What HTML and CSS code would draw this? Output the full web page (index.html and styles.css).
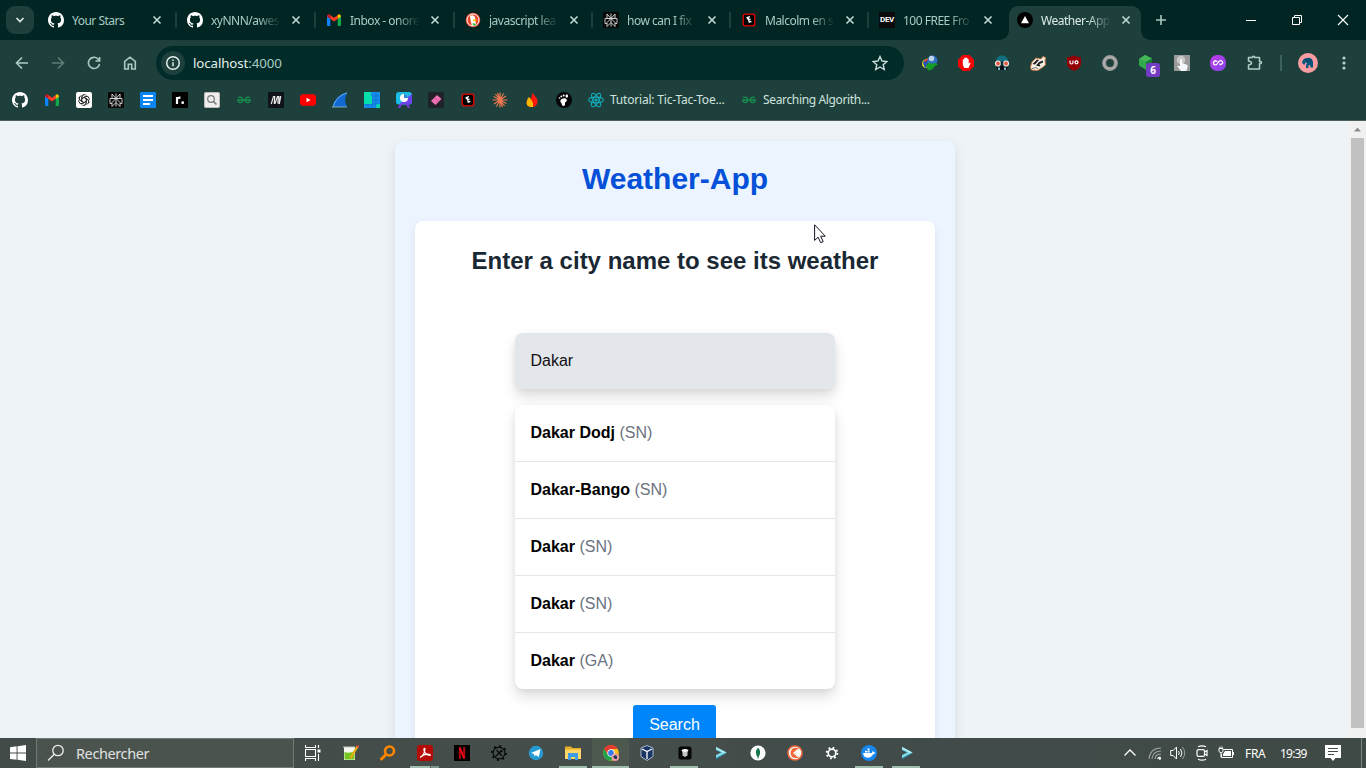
FILE: index.html
```
<!DOCTYPE html>
<html lang="en">
<head>
<meta charset="utf-8">
<title>Weather-App</title>
<link rel="stylesheet" href="styles.css">
</head>
<body>
<svg class="defs" width="0" height="0">
  <symbol id="github" viewBox="0 0 16 16"><path fill="#fff" d="M8 0C3.58 0 0 3.58 0 8c0 3.54 2.29 6.53 5.47 7.59.4.07.55-.17.55-.38 0-.19-.01-.82-.01-1.49-2.01.37-2.53-.49-2.69-.94-.09-.23-.48-.94-.82-1.13-.28-.15-.68-.52-.01-.53.63-.01 1.08.58 1.23.82.72 1.21 1.87.87 2.33.66.07-.52.28-.87.51-1.07-1.78-.2-3.64-.89-3.64-3.95 0-.87.31-1.59.82-2.15-.08-.2-.36-1.02.08-2.12 0 0 .67-.21 2.2.82.64-.18 1.32-.27 2-.27s1.36.09 2 .27c1.53-1.04 2.2-.82 2.2-.82.44 1.1.16 1.92.08 2.12.51.56.82 1.27.82 2.15 0 3.07-1.87 3.75-3.65 3.95.29.25.54.73.54 1.48 0 1.07-.01 1.93-.01 2.2 0 .21.15.46.55.38A8 8 0 0 0 16 8c0-4.42-3.58-8-8-8z"/></symbol>
  <symbol id="gmail" viewBox="0 0 16 16"><path fill="#0a84ff" d="M1 4l3.300 2.400V14H2a1 1 0 0 1-1-1z"/><path fill="#12a84c" d="M11.700 6.400L15 4v9a1 1 0 0 1-1 1h-2.300z"/><path fill="#fc3b24" d="M1.500 3.200Q3 1.800 4.300 3L8 5.800 11.700 3v3.800L8 9.600 4.300 6.800 1 4.500Q1 3.600 1.500 3.200z"/><path fill="#ffc400" d="M11.700 3Q13 1.800 14.400 2.900Q15 3.500 15 4.600l-3.300 2.300z"/><path fill="#b91424" d="M1 4.300Q1 2.800 2.500 2.300Q3.500 2.200 4.300 3v3.800z"/></symbol>
  <symbol id="perplexity" viewBox="0 0 16 16"><path fill="#090909" d="M0 0h16v16H0z"/><path fill="none" stroke="#dcdcdc" stroke-width=".9" d="M8 1.500v13M4 2l4 4.500L12 2v4.500H4zM2 6.500h12v5H12M4 11.500H2v-5M8 6.500l-4 4V14.500l4-4 4 4v-4z"/></symbol>
  <symbol id="red-e" viewBox="0 0 16 16"><rect x="2.200" y="2.200" width="11.600" height="11.600" rx="2" fill="#050505" stroke="#f00000" stroke-width="1.300"/><path d="M5.300 5.300l3.500-1.300.400 1.200-1.400.6.200.9 1.500-.2.200 1.400-1.300.3.300 1 1.500-.5.400 1.300-2.800 1.100-.9-3.500-.9-.3z" fill="#fff"/></symbol>
  <symbol id="gfg" viewBox="0 0 16 16"><path fill="none" stroke="#168b4d" stroke-width="1.400" d="M2.200 5.500Q6 4.300 6.700 7.700C7 11.500 1.800 11.500 1.800 8h12.400c0 3.500-5.200 3.500-4.900-.3Q10 4.300 13.800 5.500"/></symbol>
  <symbol id="close" viewBox="0 0 10 10"><path d="M1.500 1.500l7 7m0-7l-7 7" stroke="currentColor" stroke-width="1.600"/></symbol>
  <symbol id="shell" viewBox="0 0 16 16"><path fill="#277f97" d="M3 2.500L14 8 3 14.500v-3L8.500 8 3 5z"/><path fill="#80d9e5" d="M3 2l10.500 5.500L3 13v-3l5.500-2.700L3 5z"/><path fill="#b4edf3" d="M3 2l10.500 5.500-2.500.500L3 3.500z"/></symbol>
</svg>
<div class="screen">
  <header class="tab-strip">
    <button class="tab-search"><svg width="10" height="10" viewBox="0 0 10 10"><path d="M1.500 3l3.500 3.500L8.500 3" fill="none" stroke="#dce9e6" stroke-width="1.700"/></svg></button>
    <div class="tabs">
      <div class="tab"><svg class="ico"><use href="#github"/></svg><span class="title">Your Stars</span><svg class="close"><use href="#close"/></svg></div>
      <div class="tab"><svg class="ico"><use href="#github"/></svg><span class="title fade">xyNNN/awes</span><svg class="close"><use href="#close"/></svg></div>
      <div class="tab"><svg class="ico"><use href="#gmail"/></svg><span class="title fade">Inbox - onore</span><svg class="close"><use href="#close"/></svg></div>
      <div class="tab"><svg class="ico" viewBox="0 0 16 16"><circle cx="8" cy="8" r="7.300" fill="#e8472c"/><circle cx="8" cy="8" r="6" fill="none" stroke="#fff"/><path d="M5 4q3-2 5 1l.5 4 .5 4-4 1-1.500-6z" fill="#fff"/><path d="M8 7.500l4 .3-1 1.500H8z" fill="#ffc000"/><path d="M7.500 11l3 .7 1 1.600-3.500.5z" fill="#48b548"/></svg><span class="title fade">javascript lea</span><svg class="close"><use href="#close"/></svg></div>
      <div class="tab"><svg class="ico"><use href="#perplexity"/></svg><span class="title fade">how can I fix</span><svg class="close"><use href="#close"/></svg></div>
      <div class="tab"><svg class="ico"><use href="#red-e"/></svg><span class="title fade">Malcolm en s</span><svg class="close"><use href="#close"/></svg></div>
      <div class="tab last"><span class="dev"><b>DEV</b></span><span class="title fade">100 FREE Fro</span><svg class="close"><use href="#close"/></svg></div>
      <div class="tab active"><svg class="ico" viewBox="0 0 16 16"><circle cx="8" cy="8" r="8" fill="#000"/><path d="M8 4l4 7.300H4z" fill="#fff"/></svg><span class="title fade">Weather-App</span><svg class="close"><use href="#close"/></svg></div>
    </div>
    <svg class="new-tab" width="12" height="12" viewBox="0 0 12 12"><path d="M6 1v10M1 6h10" stroke="#a9c9c2" stroke-width="1.600"/></svg>
    <div class="window-controls">
      <svg viewBox="0 0 12 12"><path d="M1 6.500h10" stroke="#fff"/></svg>
      <svg viewBox="0 0 12 12"><path d="M1.500 3.500h7v7h-7zM3.500 3.500v-2h7v7h-2" fill="none" stroke="#fff"/></svg>
      <svg viewBox="0 0 12 12"><path d="M1 1l10 10M11 1L1 11" stroke="#fff" stroke-width="1.100"/></svg>
    </div>
  </header>

  <nav class="toolbar">
    <div class="nav-buttons">
      <svg viewBox="0 0 16 16"><path d="M14 8H3M8 2.500L2.500 8 8 13.500"/></svg>
      <svg class="dim" viewBox="0 0 16 16"><path d="M2 8h11M8 2.500L13.500 8 8 13.500"/></svg>
      <svg viewBox="0 0 16 16"><path d="M13.500 9A5.600 5.600 0 1 1 12 4l1.300 1.300M13.600 2v4H9.500"/></svg>
      <svg viewBox="0 0 16 16"><path d="M2.700 14V6.500L8 2.200l5.300 4.300V14H9.700V9.200H6.300V14z"/></svg>
    </div>
    <div class="omnibox">
      <span class="site-info"><svg viewBox="0 0 16 16"><circle cx="8" cy="8" r="6.300" fill="none" stroke="#e1eeeb" stroke-width="1.500"/><path d="M8 7.200v4M8 4.500v1.500" stroke="#e1eeeb" stroke-width="1.500"/></svg></span>
      <span class="url">localhost<i>:4000</i></span>
      <svg class="star" viewBox="0 0 16 16"><path d="M8 1.500l2 4.500 4.900.5-3.700 3.200 1.100 4.800L8 12l-4.300 2.500 1.100-4.800L1.100 6.500 6 6z" fill="none" stroke="#c8dcd8" stroke-width="1.400"/></svg>
    </div>
    <div class="extensions">
      <svg viewBox="0 0 16 16"><path d="M0 9Q0 4 6 3.500L8 7l-3 6Q0 13 0 9z" fill="#e4d02c"/><path d="M1 8Q2 4.500 6 4v7L3 13z" fill="#2455b5"/><path d="M2 5.500Q4 3.300 7 3.500L4 7z" fill="#db4032"/><circle cx="10.500" cy="5.500" r="5" fill="#326fc0"/><circle cx="9.500" cy="3.500" r="2.700" fill="#bdd6ee"/><path d="M4 10l4-3 1 2 4-1 3 1.500-3 1.500-3 3.500-4 1z" fill="#159d25"/></svg>
      <svg viewBox="0 0 16 16"><path d="M4.700 0h6.600L16 4.700v6.600L11.300 16H4.700L0 11.300V4.700z" fill="#f50505"/><path d="M4.800 8V4.600q.8-.8 1.400 0V3q.8-.8 1.500 0 .8-.9 1.600 0v1q.8-.8 1.400.2v4.500l.8-1q1-.5 1 .5L10.500 13H6.300L4.800 10z" fill="#fff"/></svg>
      <svg viewBox="0 0 16 16"><path d="M2 6Q3 .5 8 .5T14 6z" fill="#11707f"/><path d="M2 10h12l-1 5H3z" fill="#0a1117"/><path d="M4 12.500h2V15H4zM10 12.500h2V15h-2z" fill="#78b6c8"/><circle cx="4" cy="8.500" r="2.500" fill="#e4573f" stroke="#eeeae5" stroke-width="1.200"/><circle cx="12" cy="8.500" r="2.500" fill="#e4573f" stroke="#eeeae5" stroke-width="1.200"/><path d="M6.700 7h2.600v4H6.700z" fill="#102c39"/></svg>
      <svg viewBox="0 0 16 16"><path d="M.500 12L2 7l4-4 5 1 2-2.500 2.500 1L15 6l.500 4-4 3-4 2.500-6-.5z" fill="#f5f0e6" stroke="#d87843" stroke-width=".9"/><path d="M2.500 9L7 4.500l2 .5-4 4.500zM6 10.500L9 7l4-1.500v2L9.500 9l1 2.500-3-.5z" fill="#222"/><path d="M2 13.500l4-1 2 1.500" stroke="#777" fill="none"/></svg>
      <svg viewBox="0 0 16 16"><path d="M8 .5Q11 2.300 15 2.300V9q0 4-7 7-7-3-7-7V2.300Q5 2.300 8 .5z" fill="#930008"/><path d="M4 5.500v2q0 1.500 1.500 1.500t1.500-1.500v-2" stroke="#fff" fill="none" stroke-width="1.200"/><circle cx="10.500" cy="7.300" r="1.500" stroke="#fff" fill="none" stroke-width="1.200"/></svg>
      <svg viewBox="0 0 16 16"><circle cx="8" cy="8" r="5.900" fill="none" stroke="#999" stroke-width="4"/><circle cx="8" cy="8" r="6" fill="none" stroke="#aaa" stroke-width="2"/></svg>
      <span class="badge-host"><svg viewBox="0 0 16 16"><path d="M7 0l7 3.500v6L8 15 1 10.500V4z" fill="#31a84b"/><path d="M7 0l7 3.500L8 7 1 4z" fill="#43b457"/><path d="M8 7l6-3.500v6L8 15z" fill="#167c34"/></svg><b class="badge">6</b></span>
      <svg viewBox="0 0 16 16"><path d="M0 0h16v16H0z" fill="#9a9a9a"/><circle cx="7" cy="5" r="4.300" fill="#c9c9c9"/><path d="M6 11V4.500q1.200-1 2 0V8l5 1.700q1 .7.500 2.300l-1 4H7L3 11z" fill="#f4f7fc"/></svg>
      <svg viewBox="0 0 16 16"><defs><linearGradient id="violet" x2="1" y2="1"><stop stop-color="#c03aea"/><stop offset="1" stop-color="#8445e9"/></linearGradient></defs><rect width="16" height="16" rx="7" fill="url(#violet)"/><path d="M7.200 6.700L5.700 5.700Q3 6.500 3.500 9q2.300 2 4-.5l1.300-2 2-1q2 1 2 2.500l-2 1.700-1.500-1" fill="none" stroke="#fff" stroke-width="1.200"/></svg>
      <svg class="puzzle" viewBox="0 0 16 16"><path d="M1.500 2.500h4V1.700q1-1 2 0v.8h5v4h1.500q1 1 0 2h-1.500v5.500h-11v-4q3-.5 3-2t-3-2z" fill="none" stroke="#b3cec8" stroke-width="1.500" stroke-linejoin="round"/></svg>
    </div>
    <i class="bar"></i>
    <svg class="avatar" viewBox="0 0 20 20"><circle cx="10" cy="10" r="10" fill="#fa9da3"/><path d="M4 9.500Q5 5 9 5q5-1 6 4v5.500h-2.500L12 12l-1.500.5V15H8v-3l1-2-2-.5v2H5.500z" fill="#06577d"/><path d="M7 6.500q3 0 3 3M10 6q3 0 3 3" stroke="#093f61" fill="none"/></svg>
    <svg class="dots" viewBox="0 0 4 16"><circle cx="2" cy="3" r="1.600"/><circle cx="2" cy="8" r="1.600"/><circle cx="2" cy="13" r="1.600"/></svg>
  </nav>

  <nav class="bookmarks">
    <svg class="ico"><use href="#github"/></svg>
    <svg class="ico"><use href="#gmail"/></svg>
    <svg class="ico" viewBox="0 0 16 16"><rect width="16" height="16" rx="2" fill="#fff"/><g fill="none" stroke="#222" stroke-width=".8"><path id="petal" d="M5.700 9.300V5.300Q5.900 2.600 8.300 2.600q1.400 0 2.200 1.100M5.700 6.700l3.300-1.900q2.400-1.100 4 .7"/><use href="#petal" transform="rotate(60 8 8)"/><use href="#petal" transform="rotate(120 8 8)"/><use href="#petal" transform="rotate(180 8 8)"/><use href="#petal" transform="rotate(240 8 8)"/><use href="#petal" transform="rotate(300 8 8)"/></g></svg>
    <svg class="ico"><use href="#perplexity"/></svg>
    <svg class="ico" viewBox="0 0 16 16"><rect width="16" height="16" rx="1" fill="#0b86f7"/><path d="M3 4h10M3 8h10M3 12h7" stroke="#fff" stroke-width="2"/></svg>
    <svg class="ico" viewBox="0 0 16 16"><rect width="16" height="16" rx="1" fill="#000"/><path d="M5 12V5M5 8q0-2.500 3.500-2.300" stroke="#fff" stroke-width="2.200" fill="none"/><circle cx="10.700" cy="10.700" r="1.400" fill="#fff"/></svg>
    <svg class="ico" viewBox="0 0 16 16"><rect x=".5" y=".5" width="15" height="15" rx="1" fill="#eee" stroke="#bbb"/><circle cx="7" cy="7" r="3.300" fill="none" stroke="#777" stroke-width="1.200"/><path d="M9.500 9.500l3 3" stroke="#777" stroke-width="1.500"/></svg>
    <svg class="ico"><use href="#gfg"/></svg>
    <svg class="ico" viewBox="0 0 16 16"><path d="M0 0h16v16H0z" fill="#11131b"/><path d="M3.200 12L5.500 4.500H6.700L6.300 11.500H7L9.500 4.500h1L9.800 11.500" stroke="#e9e9e9" stroke-width="1.200" fill="none"/><path d="M12.500 4L11 12" stroke="#e9e9e9" stroke-width="1.700"/></svg>
    <svg class="ico" viewBox="0 0 16 16"><rect y="2.300" width="16" height="11.400" rx="3" fill="#f00"/><path d="M6.500 5.700v4.600l4-2.300z" fill="#fff"/></svg>
    <svg class="ico" viewBox="0 0 16 16"><path d="M.5 15Q3 3 15.500.5 11 7 15 15z" fill="#1269d3"/><path d="M1 15Q4 4 15 .8" stroke="#66b4ef" fill="none"/><path d="M0 15h15" stroke="#7aabb8"/></svg>
    <svg class="ico" viewBox="0 0 16 16"><path d="M0 0h16v16H0z" fill="#168ceb"/><path d="M8 4h8M12 0v16M8 8h8M0 12h16M8 12v4M4 12v4M8 4v8" stroke="#0870cc" stroke-width=".7"/><path d="M0 0h7v4h1v8H0zM12.300 12.300H16V16h-3.700z" fill="#04dfad"/></svg>
    <svg class="ico" viewBox="0 0 16 16"><rect y="0" width="16" height="12.500" rx="3" fill="#1cbbe6"/><path d="M3 12.500L16 2v8q0 2.500-3 2.500z" fill="#6d41ed"/><path d="M5 12l-2 4M11 12l2 4" stroke="#8032e6" stroke-width="2"/><circle cx="8" cy="6" r="4" fill="#fff"/><path d="M8 6V2a4 4 0 0 1 4 4z" fill="#208cdc"/></svg>
    <svg class="ico" viewBox="0 0 16 16"><rect width="16" height="16" rx="2" fill="#21212c"/><path d="M9 3l4.500 4L7.500 13 3 9z" fill="#f071b4"/><path d="M7 6l4 4" stroke="#bf4f91"/></svg>
    <svg class="ico"><use href="#red-e"/></svg>
    <svg class="ico" viewBox="0 0 16 16"><path d="M8 .5v15M.5 8h15M3.400 2l9.200 12M14 4L2 12M5.500 1l5 14M11.500 1.500l-7 13M1.500 4.500l13 7" stroke="#ed7751" stroke-width="1.200"/></svg>
    <svg class="ico" viewBox="0 0 16 16"><path d="M8 1q6 5 5.500 9-.5 5-5.500 5-5 0-5.500-4 0-3 2.500-5l1 2q2-2 2-7z" fill="#ff180a"/><path d="M5 5q5 5 4 9.900-6 .8-6.500-4Q2.600 7 5 5z" fill="#ffb900"/></svg>
    <svg class="ico" viewBox="0 0 16 16"><circle cx="8" cy="8" r="8" fill="#050505"/><path d="M4.500 8q3-3 6-1 1 2-1.500 3.500V13q-2 2-3 0-.3-2-1.500-3z" fill="#fff"/><g fill="#fff"><circle cx="3.500" cy="6" r=".8"/><circle cx="5.300" cy="4.400" r=".9"/><circle cx="7.700" cy="3.600" r="1"/><ellipse cx="10.800" cy="4" rx="1.300" ry="1.700"/></g></svg>
    <span class="named tutorial"><svg class="ico" viewBox="0 0 16 16"><g fill="none" stroke="#16a9b8" stroke-width="1.100"><ellipse cx="8" cy="8" rx="7.400" ry="2.900"/><ellipse cx="8" cy="8" rx="7.400" ry="2.900" transform="rotate(60 8 8)"/><ellipse cx="8" cy="8" rx="7.400" ry="2.900" transform="rotate(120 8 8)"/></g><circle cx="8" cy="8" r="1.600" fill="#16a9b8"/></svg><span>Tutorial: Tic-Tac-Toe...</span></span>
    <span class="named"><svg class="ico"><use href="#gfg"/></svg><span>Searching Algorith...</span></span>
  </nav>

  <div class="viewport">
    <main class="page">
      <section class="app">
        <h1>Weather-App</h1>
        <div class="panel">
          <h2>Enter a city name to see its weather</h2>
          <div class="city-input">Dakar</div>
          <ul class="results">
            <li><b>Dakar Dodj</b> (SN)</li>
            <li><b>Dakar-Bango</b> (SN)</li>
            <li><b>Dakar</b> (SN)</li>
            <li><b>Dakar</b> (SN)</li>
            <li><b>Dakar</b> (GA)</li>
          </ul>
          <button class="search-btn">Search</button>
        </div>
      </section>
    </main>
    <div class="scrollbar"><svg width="17" height="17" viewBox="0 0 17 17"><path d="M8.500 6.500l3.500 4H5z" fill="#8b8b8b"/></svg><i></i></div>
  </div>
  <svg class="cursor" viewBox="0 0 12 20"><path d="M.6.800v15.600l3.500-3.200 2.600 5.500 2.500-1.100-2.500-5.400h4.600z" fill="#fff" stroke="#111122"/></svg>

  <footer class="taskbar">
    <div class="start"><svg width="16" height="16" viewBox="0 0 16 16"><path d="M0 2.200l6.600-.9v6.300H0zM7.500 1.200L16 0v7.600H7.500zM0 8.500h6.600v6.300L0 13.900zM7.500 8.500H16V16l-8.500-1.200z" fill="#fff"/></svg></div>
    <div class="search"><svg width="18" height="18" viewBox="0 0 18 18"><circle cx="11" cy="6.500" r="5.200" fill="none" stroke="#eee" stroke-width="1.300"/><path d="M7.300 10.200L1 16.500" stroke="#eee" stroke-width="1.300"/></svg><span>Rechercher</span></div>
    <div class="apps">
      <span><svg viewBox="0 0 16 16"><path d="M.5 0v2.500h10V0M.5 16v-2.500h10V16M.500 4.500h10v7H.5zM13.500 0v3M13.500 9v7" fill="none" stroke="#fff" stroke-width="1.100"/><path d="M12.500 4.500h3v3h-3z" fill="#fff"/></svg></span>
      <span><svg viewBox="0 0 16 16"><path d="M1 2h11v13H1z" fill="#f5f8ee"/><path d="M1.500 7q5 2 10-1v8.500h-10z" fill="#72c71c"/><path d="M1 1v2m2-2v2m2-2v2m2-2v2m2-2v2m2-2v2" stroke="#c7c7c7"/><path d="M14.500 1.500L7.500 13" stroke="#e7ad16" stroke-width="2.300"/><path d="M15.500 0l-1.300 2" stroke="#cb4040" stroke-width="2.500"/></svg></span>
      <span><svg viewBox="0 0 16 16"><circle cx="9.500" cy="6" r="4.500" fill="none" stroke="#ff8500" stroke-width="2.600"/><path d="M6 9.500L1.500 14" stroke="#ff8500" stroke-width="3" stroke-linecap="round"/></svg></span>
      <span class="run split"><svg viewBox="0 0 16 16"><rect width="16" height="16" rx="3" fill="#b50c07"/><path d="M3 12.500q5-3 5-9-1.500-1-1 2 1 4 6 5 1-.8-1-1.300-5-.4-9 3.300z" fill="none" stroke="#fff" stroke-width="1.100"/></svg></span>
      <span><svg viewBox="0 0 16 16"><path d="M0 0h16v16H0z" fill="#000"/><path d="M5.800 14V2.500M10.200 13.500V2" fill="none" stroke="#b50710" stroke-width="2"/><path d="M5.800 2.500l4.400 11" stroke="#f20c18" stroke-width="2"/></svg></span>
      <span><svg viewBox="0 0 16 16"><circle cx="8" cy="8" r="5.900" fill="none" stroke="#080a0a" stroke-width="1.100"/><circle cx="8" cy="8" r="7.100" fill="none" stroke="#080a0a" stroke-width="1.800" stroke-dasharray="2 3.577"/><path d="M4.500 11.500L10 6.300M5.500 5l5.500 6M9.500 5l2 2" stroke="#080a0a" stroke-width="1.200"/></svg></span>
      <span><svg viewBox="0 0 16 16"><circle cx="8" cy="8" r="7.200" fill="#259bd5"/><path d="M3 8l9.500-4-1.700 8-3-2-1.500 1.400L6 9z" fill="#fff"/></svg></span>
      <span class="run"><svg viewBox="0 0 16 16"><path d="M0 1.500h6L7.500 3H16v11H0z" fill="#e9ae28"/><path d="M0 4.500h16V14H0z" fill="#ffd767"/><path d="M3 15V8h10v7h-3v-3H6v3z" fill="#3c9ce5"/></svg></span>
      <span class="run current"><svg viewBox="0 0 16 16"><circle cx="8" cy="8" r="7.800" fill="#fbc116"/><path d="M1.200 4.100A7.800 7.800 0 0 1 14.800 4H8L5 10z" fill="#e33b2e"/><path d="M1.200 4.100A7.800 7.800 0 0 0 8 15.800l3.500-6H5z" fill="#20a34a"/><circle cx="8" cy="8" r="3.700" fill="#fff"/><circle cx="8" cy="8" r="2.900" fill="#3779e5"/><circle cx="12.300" cy="12.300" r="3.700" fill="#f39ca8"/><path d="M10 12l2-2 2 1v3h-2z" fill="#163e5b"/></svg></span>
      <span><svg viewBox="0 0 16 16"><path d="M8 .5L14 3v8.500L8 15.500l-6-4V3z" fill="#173464" stroke="#a9bad2"/><path d="M3 4l5 2.500L13 4M8 6.500V14" fill="none" stroke="#fff" stroke-width="1.300"/></svg></span>
      <span class="run"><svg viewBox="0 0 16 16"><rect x="1.500" y="1.500" width="13" height="13" rx="2.500" fill="#050505"/><path d="M4.500 5L8 4l3.500 1-1 2.500v3L8 12l-2.500-1.500V8z" fill="#c4c4c4"/><path d="M4.500 5L8 4l3.500 1L8 7z" fill="#fff"/></svg></span>
      <span><svg><use href="#shell"/></svg></span>
      <span><svg viewBox="0 0 16 16"><circle cx="8" cy="8" r="7.600" fill="#fff"/><path d="M8 2.500q4.500 5 0 9.700-4.500-4.700 0-9.700z" fill="#13754b"/><path d="M8 10v3.500" stroke="#13754b"/></svg></span>
      <span><svg viewBox="0 0 16 16"><circle cx="8" cy="8" r="7" fill="none" stroke="#f26b3a" stroke-width="1.600"/><circle cx="8" cy="8" r="6.200" fill="#fff"/><path d="M12 3.800Q8 1.800 5 4q-3 4 0 8 3 2 7 .2L8 8z" fill="#f26b3a"/><path d="M11 4.500L7 8l4 3.500" stroke="#fff" fill="none" stroke-width="1.200"/></svg></span>
      <span><svg viewBox="0 0 16 16"><circle cx="8" cy="8" r="3.800" fill="none" stroke="#fff" stroke-width="1.700"/><circle cx="8" cy="8" r="5.300" fill="none" stroke="#fff" stroke-width="2" stroke-dasharray="1.700 2.460"/></svg></span>
      <span class="run"><svg viewBox="0 0 16 16"><circle cx="8" cy="8" r="8" fill="#1687ee"/><path d="M2 8h9q.2-2 1-2l1 1.500 1.500.1q-.5 1.500-2 1.500Q10 13 6.500 12.700 2.500 12.500 2 8zM4 5.800h2v1.700H4zM6.500 5.800h2v1.700h-2zM6.500 3.600h2v1.700h-2z" fill="#fff"/></svg></span>
      <span class="run"><svg><use href="#shell"/></svg></span>
    </div>
    <div class="tray">
      <svg class="t-chev" viewBox="0 0 16 16"><path d="M2.500 10.500L8 5l5.500 5.500" fill="none" stroke="#fff" stroke-width="1.300"/></svg>
      <svg class="t-wifi" viewBox="0 0 16 16"><path d="M2 14Q3 3 14 3M5 14q1-8 9-8M8 14q.5-5 6-5" fill="none" stroke="#9ba3a0" stroke-width="1.100"/><path d="M10.500 14q0-2 3-2" fill="none" stroke="#fff"/><circle cx="12.800" cy="13.500" r="1.300" fill="#fff"/></svg>
      <svg class="t-sound" viewBox="0 0 16 16"><path d="M.700 5.500h2.500L6.500 2v12l-3.300-3.500H.700z" fill="none" stroke="#fff"/><path d="M8.500 6q1.500 2 0 4M10.500 4q3 4 0 8" fill="none" stroke="#fff"/><path d="M12.500 2q4.500 6 0 12" fill="none" stroke="#96a09b"/></svg>
      <svg class="t-meet" viewBox="0 0 16 16"><rect x="3" y="4.600" width="7.500" height="6.800" rx="1.500" fill="none" stroke="#fff" stroke-width="1.200"/><path d="M10.500 7L13 5.500v5L10.500 9M4 1.800q4-2 8 0M4 14.200q4 2 8 0" fill="none" stroke="#fff" stroke-width="1.200"/></svg>
      <svg class="t-batt" viewBox="0 0 16 16"><path d="M5.500 4.500h9v8H3.500V9M1 3.500h4v3L3 8 1 6.500zM2 1.500v2M4 1.500v2M3 8v4.500M15.500 7v3" fill="none" stroke="#fff"/><path d="M7 6h6v5H5V9z" fill="#fff"/></svg>
      <span class="lang">FRA</span><span class="time">19:39</span>
      <svg class="t-note" viewBox="0 0 16 16"><path d="M0 0h16v13H10.500L8 16l-2.500-3H0z" fill="#fff"/><path d="M3 3.500h10M3 6.500h10M3 9.500h6" stroke="#424b47"/></svg>
    </div>
  </footer>
</div>
</body>
</html>
```
FILE: styles.css
```
* { box-sizing: border-box; }
body { margin: 0; overflow: hidden; font-family: "Liberation Sans", Arial, sans-serif; }
svg { display: block; flex: none; }
button { border: 0; padding: 0; font: inherit; }
.defs { position: absolute; }
.screen { width: 1366px; height: 768px; display: flex; flex-direction: column; background: #1e403c; position: relative; }
.ico { width: 16px; height: 16px; }

.tab-strip { height: 40px; background: #002522; display: flex; align-items: center; font: 12px "Noto Sans", sans-serif; color: #a9cbc4; flex: none; }
.tab-search { width: 28px; height: 28px; border-radius: 9px; margin-left: 6px; background: #1e403c; display: flex; align-items: center; justify-content: center; }
.tabs { display: flex; margin-left: 4px; height: 40px; width: 1107px; flex: none; }
.tab { flex: none; width: 138px; display: flex; align-items: center; padding-left: 10px; position: relative; }
.tab:nth-child(-n+3) { width: 139px; }
.tab:not(.active):not(.last)::after { content: ""; position: absolute; right: 0; top: 12px; width: 2px; height: 16px; background: #1e403c; border-radius: 1px; }
.title { margin-left: 8px; width: 72px; flex: none; white-space: nowrap; letter-spacing: -.5px; }
.fade { -webkit-mask-image: linear-gradient(90deg, #000 65%, transparent 97%); mask-image: linear-gradient(90deg, #000 65%, transparent 97%); }
.close { width: 10px; height: 10px; margin-left: 8px; color: #c0dad5; }
.dev { width: 16px; height: 16px; flex: none; background: #0a0a0a; display: flex; align-items: center; justify-content: center; font: 8px/16px "Roboto", sans-serif; color: #fff; letter-spacing: -.3px; }
.active { color: #dcebe8; }
.active::before { content: ""; position: absolute; left: 2px; right: 4px; top: 6px; bottom: 0; background: #1e403c; border-radius: 9px 9px 0 0; z-index: 0; }
.active::after { content: ""; position: absolute; left: -7px; right: -5px; bottom: 0; height: 9px; background: radial-gradient(circle at 0 0, transparent 8.500px, #1e403c 9px) left / 9px 9px no-repeat, radial-gradient(circle at 100% 0, transparent 8.500px, #1e403c 9px) right / 9px 9px no-repeat; }
.active > * { position: relative; z-index: 1; }
.new-tab { margin-left: 10px; }
.window-controls { margin-left: auto; display: flex; gap: 34px; padding-right: 17px; }
.window-controls svg { width: 12px; height: 12px; }

.toolbar { height: 46px; display: flex; align-items: center; flex: none; }
.nav-buttons { display: flex; gap: 20px; padding-left: 14px; width: 156px; flex: none; }
.nav-buttons svg { width: 16px; height: 16px; fill: none; stroke: #a9cbc4; stroke-width: 1.6; }
.nav-buttons .dim { stroke: #5b7d77; }
.omnibox { width: 748px; height: 34px; flex: none; border-radius: 17px; background: #012b28; display: flex; align-items: center; padding: 0 16px 0 5px; color: #e3efec; font: 13.300px "Noto Sans", sans-serif; }
.site-info { width: 24px; height: 24px; border-radius: 50%; background: #1e403c; display: flex; align-items: center; justify-content: center; }
.site-info svg { width: 16px; height: 16px; }
.url { margin-left: 8px; letter-spacing: -.1px; }
.url i { font-style: normal; color: #a9cbc4; }
.star { width: 16px; height: 16px; margin-left: auto; }
.extensions { display: flex; gap: 20px; margin-left: 18px; }
.extensions svg { width: 16px; height: 16px; }
.extensions .puzzle { width: 18px; margin-right: -2px; }
.badge-host { position: relative; width: 16px; height: 16px; }
.badge { position: absolute; left: 8px; top: 8px; width: 14px; height: 14px; border-radius: 3px; background: #743bc4; color: #fff; font: bold 10px/14px "Noto Sans", sans-serif; text-align: center; }
.bar { width: 2px; height: 16px; background: #3d625c; margin-left: 18px; }
.avatar { width: 20px; height: 20px; margin-left: 16px; }
.dots { width: 4px; height: 16px; margin-left: 24px; fill: #b6d1cc; }

.bookmarks { height: 35px; flex: none; display: flex; align-items: center; gap: 16px; padding: 0 12px 7px; border-bottom: 1px solid #4e5f5d; color: #cfe2de; font: 12px "Noto Sans", sans-serif; }
.named { display: flex; align-items: center; gap: 6px; white-space: nowrap; letter-spacing: -.35px; }
.tutorial { width: 137px; letter-spacing: -.2px; }

.viewport { height: 617px; flex: none; display: flex; overflow: hidden; background: #eef3f7; }
.page { flex: 1; padding: 20px 0; display: flex; justify-content: center; align-items: flex-start; }
.app { width: 560px; height: 800px; margin-left: 1px; background: #ebf4ff; border-radius: 8px; padding: 20px; box-shadow: 0 4px 12px rgba(0,0,0,.1); text-align: center; }
h1 { margin: 0 0 24px; font-size: 30px; line-height: 36px; color: #0550d8; }
.panel { background: #fff; height: 700px; border-radius: 8px; padding: 22px 20px; display: flex; flex-direction: column; align-items: center; box-shadow: 0 4px 8px rgba(0,0,0,.08); }
h2 { margin: 0 0 54px; font-size: 24px; line-height: 36px; color: #1a2833; }
.city-input, .results { width: 320px; border-radius: 8px; text-align: left; font-size: 16px; box-shadow: 0 8px 14px rgba(0,0,0,.12), 0 2px 6px rgba(0,0,0,.06); }
.city-input { height: 56px; line-height: 56px; padding: 0 15.500px; background: #e3e6eb; color: #111; }
.results { list-style: none; margin: 16px 0; padding: 0; background: #fff; color: #6b7280; }
.results li { height: 57px; line-height: 55px; padding: 0 15.500px; border-bottom: 1px solid #e3e6eb; }
.results li:last-child { height: 56px; border: 0; }
.results b { color: #000; }
.search-btn { width: 83px; height: 40px; flex: none; margin-right: 1px; border-radius: 3px; background: #0086fa; color: #fff; font-size: 16px; line-height: 38px; }
.scrollbar { width: 17px; background: #f1f1f1; display: flex; flex-direction: column; align-items: center; }
.scrollbar i { width: 13px; height: 590px; background: #c1c1c1; }
.cursor { position: absolute; left: 814px; top: 224px; width: 12px; height: 20px; }

.taskbar { height: 30px; flex: none; display: flex; background: linear-gradient(90deg, #424b48, #454e4a 45%, #414b4a 65%, #3f4945); color: #fff; }
.start { width: 36px; display: flex; align-items: center; justify-content: center; }
.search { width: 258px; border: 1px solid #727a76; background: #4b534e; display: flex; align-items: center; padding-left: 10px; gap: 11px; font: 14.500px "Noto Sans", sans-serif; color: #e1e1e1; letter-spacing: -.4px; }
.apps { display: flex; width: 631px; }
.apps span { flex: 1; min-width: 0; display: flex; align-items: center; justify-content: center; border-bottom: 2px solid transparent; position: relative; padding-top: 1px; }
.apps span:nth-child(n+2):nth-child(-n+9), .apps span:nth-child(11) { left: 1px; }
.apps svg { width: 16px; height: 16px; }
.run::after { content: ""; position: absolute; left: 4px; right: 5px; bottom: -2px; height: 2px; background: #a0bcad; }
.split::after { background: linear-gradient(90deg, #a0bcad 68%, #586b62 68% 72%, #7d978a 72%); }
.current { background: #4d594f; }
.apps .current::after { left: 0; right: 0; }
.tray { margin-left: auto; width: 240px; display: flex; align-items: center; font: 12px "Noto Sans", sans-serif; border-right: 1px solid #7c8480; margin-right: 4px; }
.tray svg { width: 16px; height: 16px; }
.t-wifi { margin-left: 9px; }
.tray .t-sound { margin-left: 7px; }
.tray .t-meet { margin-left: 8px; }
.tray .t-batt { margin-left: 8px; }
.lang { margin-left: 11px; width: 35px; letter-spacing: -.3px; }
.time { width: 45px; letter-spacing: -.8px; }
```
